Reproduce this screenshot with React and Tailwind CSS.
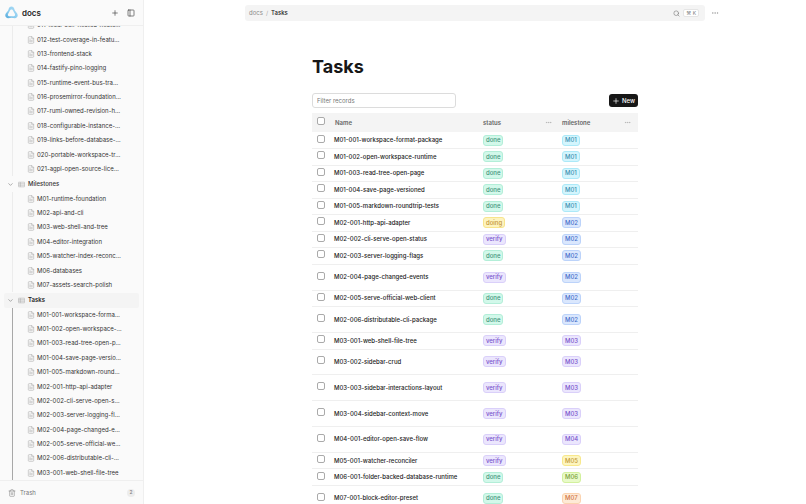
import React, { useState } from 'react';
import { ChevronDown, FileText, MoreHorizontal, PanelLeft, Plus, Search, Trash2 } from 'lucide-react';

const decisions = [
    "011-local-self-hosted-hoste…",
    "012-test-coverage-in-featu…",
    "013-frontend-stack",
    "014-fastify-pino-logging",
    "015-runtime-event-bus-tra…",
    "016-prosemirror-foundation…",
    "017-rumi-owned-revision-h…",
    "018-configurable-instance-…",
    "019-links-before-database-…",
    "020-portable-workspace-tr…",
    "021-agpl-open-source-lice…",
];

const milestones = [
    "M01-runtime-foundation",
    "M02-api-and-cli",
    "M03-web-shell-and-tree",
    "M04-editor-integration",
    "M05-watcher-index-reconc…",
    "M06-databases",
    "M07-assets-search-polish",
];

const taskPages = [
    "M01-001-workspace-forma…",
    "M01-002-open-workspace-…",
    "M01-003-read-tree-open-p…",
    "M01-004-save-page-versio…",
    "M01-005-markdown-round…",
    "M02-001-http-api-adapter",
    "M02-002-cli-serve-open-s…",
    "M02-003-server-logging-fl…",
    "M02-004-page-changed-e…",
    "M02-005-serve-official-we…",
    "M02-006-distributable-cli-…",
    "M03-001-web-shell-file-tree",
];

const records = [
    { name: "M01-001-workspace-format-package", status: "done", milestone: "M01" },
    { name: "M01-002-open-workspace-runtime", status: "done", milestone: "M01" },
    { name: "M01-003-read-tree-open-page", status: "done", milestone: "M01" },
    { name: "M01-004-save-page-versioned", status: "done", milestone: "M01" },
    { name: "M01-005-markdown-roundtrip-tests", status: "done", milestone: "M01" },
    { name: "M02-001-http-api-adapter", status: "doing", milestone: "M02" },
    { name: "M02-002-cli-serve-open-status", status: "verify", milestone: "M02" },
    { name: "M02-003-server-logging-flags", status: "done", milestone: "M02" },
    { name: "M02-004-page-changed-events", status: "verify", milestone: "M02", tall: true },
    { name: "M02-005-serve-official-web-client", status: "done", milestone: "M02" },
    { name: "M02-006-distributable-cli-package", status: "done", milestone: "M02", tall: true },
    { name: "M03-001-web-shell-file-tree", status: "verify", milestone: "M03" },
    { name: "M03-002-sidebar-crud", status: "verify", milestone: "M03", tall: true },
    { name: "M03-003-sidebar-interactions-layout", status: "verify", milestone: "M03", tall: true },
    { name: "M03-004-sidebar-context-move", status: "verify", milestone: "M03", tall: true },
    { name: "M04-001-editor-open-save-flow", status: "verify", milestone: "M04", tall: true },
    { name: "M05-001-watcher-reconciler", status: "verify", milestone: "M05" },
    { name: "M06-001-folder-backed-database-runtime", status: "done", milestone: "M06" },
    { name: "M07-001-block-editor-preset", status: "done", milestone: "M07", tall: true },
];

const tagColors = {
    done: "bg-[#d2f8ea] border-[#b3eed8] text-[#3f937b]",
    doing: "bg-[#fdf3bf] border-[#f8e48c] text-[#c39338]",
    verify: "bg-[#ebe6fd] border-[#dad0fa] text-[#7853cc]",
    M01: "bg-[#d3f5fd] border-[#ace9f8] text-[#3a8fb0]",
    M02: "bg-[#dae7fd] border-[#bcd3fa] text-[#456dca]",
    M03: "bg-[#ebe6fd] border-[#dad0fa] text-[#7853cc]",
    M04: "bg-[#ebe6fd] border-[#dad0fa] text-[#7853cc]",
    M05: "bg-[#fdf5bf] border-[#f8e88c] text-[#c39a38]",
    M06: "bg-[#e8fac8] border-[#d2f09d] text-[#7ba03c]",
    M07: "bg-[#feead6] border-[#fbd3b0] text-[#cf7443]",
};

const Logo = () => (
    <svg viewBox="0 0 24 24" className="size-[13px] shrink-0" aria-hidden="true">
        <defs>
            <linearGradient id="drop" x1="0" y1="1" x2="1" y2="0">
                <stop offset="0" stopColor="#4fa6da" />
                <stop offset="0.4" stopColor="#8accef" />
                <stop offset="1" stopColor="#b0ddf5" />
            </linearGradient>
        </defs>
        <path fill="url(#drop)" fillRule="evenodd" d="M12 1c3 0 4.600 1.800 5.200 4.400.4 1.900 1.300 3.400 2.800 5.100 2 2.200 3.500 4.300 3.500 6.800 0 3.200-2.300 5.400-5.300 5.400-2.300 0-3.900-.9-6.200-.9s-3.900.9-6.200.9c-3 0-5.300-2.200-5.300-5.400 0-2.500 1.500-4.600 3.500-6.800 1.500-1.700 2.400-3.200 2.800-5.100C7.400 2.800 9 1 12 1Zm0 5.500c-1.800 0-2.600 1.200-3.500 3l-2.600 4.700c-1.300 2.600-.3 4.600 2.300 4.600h7.600c2.600 0 3.600-2 2.300-4.600l-2.600-4.700c-.9-1.800-1.700-3-3.500-3Z" />
    </svg>
);

const DatabaseIcon = () => (
    <svg viewBox="0 0 24 24" className="size-[7px] shrink-0 text-[#b0b0b0]" fill="none" stroke="currentColor" strokeWidth="2" aria-hidden="true">
        <rect x="1" y="4" width="22" height="16" rx="2" />
        <path d="M1 9.500h22M1 14.500h22M8 4v16" />
    </svg>
);

const Tag = ({ value }) => (
    <span className={"inline-flex h-[11px] items-center rounded-[3px] border px-[2px] text-[6px] leading-none font-medium " + tagColors[value]}>
        {value}
    </span>
);

const PageLink = ({ title, active }) => (
    <li className="flex min-h-0 flex-1 pl-3">
        <span className={active ? "w-px bg-[#a8a8a8]" : "w-px bg-[#ececec]"} />
        <a href="#page" className="flex min-w-0 items-center gap-[2px] pl-[14px] text-[#333]">
            <FileText className="size-2 shrink-0 text-[#a3a3a3]" strokeWidth={1.5} />
            <span className="whitespace-nowrap">{title}</span>
        </a>
    </li>
);

const GroupLink = ({ title, active }) => (
    <li className={"mx-1 mt-px flex min-h-0 flex-1 items-center rounded-xs " + (active ? "bg-[#f4f4f4] font-semibold text-[#222]" : "font-medium text-[#333]")}>
        <button type="button" aria-label={"Collapse " + title} className="ml-[3px] text-[#777]">
            <ChevronDown className="size-[7px]" />
        </button>
        <a href="#group" className="flex items-center gap-[3px] pl-1">
            <DatabaseIcon />
            {title}
        </a>
    </li>
);

const Sidebar = () => (
    <aside className="flex w-36 shrink-0 flex-col border-r border-[#efefef] bg-[#fafafa]">
        <header className="flex h-[26px] shrink-0 items-center border-b border-[#efefef] pl-[5px] pr-2">
            <Logo />
            <span className="pl-1 text-[8px] font-semibold text-[#222]">docs</span>
            <div className="ml-auto flex items-center gap-2 text-[#444]">
                <button type="button" aria-label="New page"><Plus className="size-2" /></button>
                <button type="button" aria-label="Toggle sidebar"><PanelLeft className="size-2" /></button>
            </div>
        </header>
        <nav className="min-h-0 flex-1 overflow-hidden text-[6px] leading-none" aria-label="Pages">
            <ul className="-mt-2 flex h-[462px] flex-col">
                {decisions.map((title) => <PageLink key={title} title={title} />)}
                <GroupLink title="Milestones" />
                {milestones.map((title) => <PageLink key={title} title={title} />)}
                <GroupLink title="Tasks" active />
                {taskPages.map((title) => <PageLink key={title} title={title} active />)}
            </ul>
        </nav>
        <footer className="flex h-6 shrink-0 items-center border-t border-[#efefef] px-2 text-[6px] text-[#777]">
            <button type="button" className="flex items-center gap-1">
                <Trash2 className="size-2" strokeWidth={1.5} />
                Trash
            </button>
            <span className="ml-auto flex size-2 items-center justify-center rounded-full bg-[#ececec] text-[5px]">2</span>
        </footer>
    </aside>
);

const TopBar = () => (
    <div className="grid grid-cols-[1fr_minmax(0,460px)_1fr] items-center pt-[5px]">
        <div className="col-start-2 flex h-4 items-center rounded-[3px] bg-[#f4f4f4] pl-1 pr-[6px] text-[6px] leading-none">
            <nav aria-label="Breadcrumb" className="flex gap-[3px]">
                <a href="#docs" className="text-[#8a8a8a]">docs</a>
                <span className="text-[#aaa]">/</span>
                <span className="font-medium text-[#222]">Tasks</span>
            </nav>
            <button type="button" aria-label="Search" className="ml-auto flex items-center gap-[3px] text-[#777]">
                <Search className="size-[7px]" />
                <kbd className="flex h-2 items-center rounded-xs border border-[#e5e5e5] bg-white px-[2px] font-['Inter','DejaVu_Sans',sans-serif] text-[5px] leading-none">⌘ K</kbd>
            </button>
        </div>
        <button type="button" aria-label="Page options" className="ml-[6px] justify-self-start text-[#888]">
            <MoreHorizontal className="size-2" strokeWidth={1.5} />
        </button>
    </div>
);

const Checkbox = ({ label }) => (
    <input type="checkbox" aria-label={label} className="block size-2 appearance-none rounded-xs border border-[#aaa] bg-white checked:bg-[#171717]" />
);

const HeadCell = ({ children }) => (
    <th className="px-[3px] font-semibold">
        <div className="flex items-center justify-between pr-1">
            {children}
            <button type="button" aria-label={children + " options"} className="text-[#aaa]">
                <MoreHorizontal className="size-[7px]" />
            </button>
        </div>
    </th>
);

const App = () => {

    const [filter, setFilter] = useState("");

    const shown = records.filter((r) => r.name.toLowerCase().includes(filter.toLowerCase()));

    return (
        <div className="flex h-screen overflow-hidden bg-white font-['Inter',sans-serif] text-[#222]">
            <Sidebar />
            <main className="min-w-0 flex-1 overflow-hidden">
                <TopBar />
                <div className="mx-auto max-w-[326px] pt-[34px]">
                    <h1 className="text-[18px] leading-6 font-bold text-[#171717]">Tasks</h1>
                    <div className="flex items-center justify-between pt-[14px] pb-[5px]">
                        <input type="text" aria-label="Filter records" placeholder="Filter records" value={filter} onChange={(e) => setFilter(e.target.value)} className="h-[15px] w-36 rounded-[3px] border border-[#dcdcdc] px-1 text-[6px] placeholder:text-[#777] focus:outline-none" />
                        <button type="button" className="flex h-[13px] items-center gap-[2px] rounded-[3px] bg-[#171717] px-[3px] text-[6px] font-medium text-white">
                            <Plus className="size-2" />
                            New
                        </button>
                    </div>
                    <table className={"w-full table-fixed text-left text-[6px] leading-none " + (shown.length === records.length ? "h-[399px]" : "")}>
                        <colgroup>
                            <col className="w-[18px]" />
                            <col />
                            <col className="w-[79px]" />
                            <col className="w-[79px]" />
                        </colgroup>
                        <thead>
                            <tr className="h-[19px] bg-[#f4f4f4] text-[#666]">
                                <th className="pb-[3px] pl-[5px]"><Checkbox label="Select all" /></th>
                                <th className="px-[5px] font-semibold">Name</th>
                                <HeadCell>status</HeadCell>
                                <HeadCell>milestone</HeadCell>
                            </tr>
                        </thead>
                        <tbody>
                            {shown.map((r) => (
                                <tr key={r.name} className={"border-b border-[#efefef] " + (r.tall ? "h-[25px]" : "h-4")}>
                                    <td className="pb-[3px] pl-[5px]"><Checkbox label={"Select " + r.name} /></td>
                                    <td className="px-1 font-medium whitespace-nowrap">{r.name}</td>
                                    <td className="px-[3px]"><div className="flex"><Tag value={r.status} /></div></td>
                                    <td className="px-[3px]"><div className="flex"><Tag value={r.milestone} /></div></td>
                                </tr>
                            ))}
                        </tbody>
                    </table>
                </div>
            </main>
        </div>
    );
};

export default App;
